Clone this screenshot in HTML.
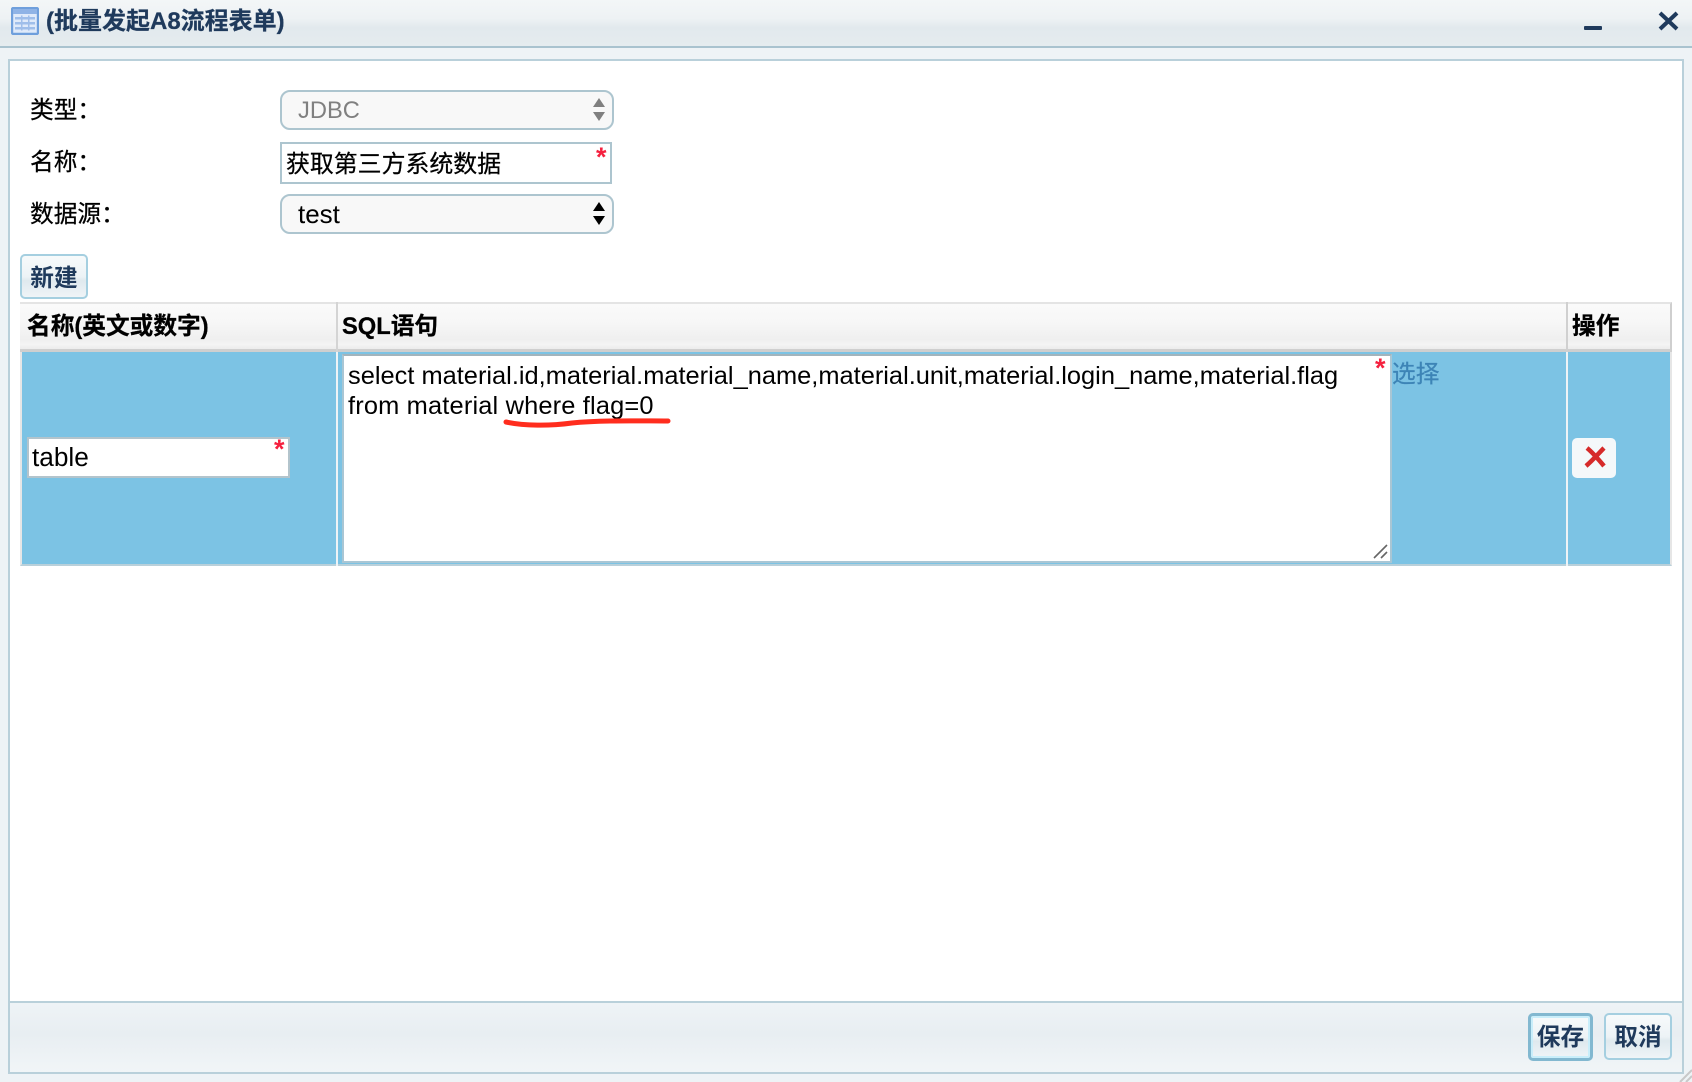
<!DOCTYPE html>
<html><head><meta charset="utf-8"><style>
html,body{margin:0;padding:0}
body{width:1692px;height:1082px;position:relative;overflow:hidden;background:#eef3f6;font-family:"Liberation Sans","Noto Sans CJK SC",sans-serif;color:#000}
div,span,svg{position:absolute;box-sizing:border-box}
.t{white-space:nowrap;line-height:30px;height:30px;font-size:23.7px;-webkit-text-stroke:.25px currentColor}
.l{font-size:25.4px;-webkit-text-stroke:0}
.star{color:#f5213f;font-size:27px;font-weight:bold;line-height:24px;height:24px;white-space:nowrap}
.b{font-weight:bold}
.btn{border:2px solid #a5cfe0;border-radius:5px;background:linear-gradient(#f7fafb 0,#edf3f6 50%,#dfe9ee 60%,#eff4f7 100%);color:#1f3a5c;font-weight:bold;text-align:center;font-size:23.7px}
.sel{background:#f8f8f8;border:2px solid #adc5cf;border-radius:10px}
.th{background:linear-gradient(#fafafa 0,#f7f7f7 40%,#efefef 80%,#f4f4f4 90%,#ececec 100%)}
</style></head><body>
<div style="left:0;top:0;width:1692px;height:48px;background:linear-gradient(#f3f6f7 0,#eef2f4 40%,#e2e9ed 60%,#e5ecef 100%);border-bottom:2px solid #a9c3cf"></div>
<svg style="left:11px;top:7px" width="28" height="28" viewBox="0 0 28 28"><rect x="1" y="1" width="26" height="26" rx="1.5" fill="#dfeafa" stroke="#6f9fdc" stroke-width="2.4"/><rect x="2" y="2" width="24" height="5" fill="#8fb3e6"/><g fill="#9fbeea"><rect x="4" y="10" width="20" height="2.5"/><rect x="4" y="15" width="20" height="2.5"/><rect x="4" y="20" width="20" height="2.5"/><rect x="10" y="8.5" width="1.5" height="15"/><rect x="17" y="8.5" width="1.5" height="15"/></g></svg>
<div class="t b" style="left:46px;top:7px;color:#1f3a5c;font-size:24px">(批量发起A8流程表单)</div>
<div style="left:1584px;top:26px;width:18px;height:4px;background:#1f3a5c;border-radius:1px"></div>
<svg style="left:1658px;top:11px" width="21" height="20" viewBox="0 0 21 20"><path d="M2 2L19 18M19 2L2 18" stroke="#1f3a5c" stroke-width="4"/></svg>

<div style="left:8px;top:59px;width:1676px;height:1015px;border:2px solid #b9d0da;background:#fff"></div>
<div style="left:10px;top:1001px;width:1672px;height:71px;border-top:2px solid #b9d0da;background:linear-gradient(#eef3f6 0,#e8eef2 45%,#f1f5f7 100%)"></div>

<div class="t" style="left:30px;top:96px">类型：</div>
<div class="t" style="left:30px;top:148px">名称：</div>
<div class="t" style="left:30px;top:200px">数据源：</div>

<div class="sel" style="left:280px;top:90px;width:334px;height:40px"></div>
<div class="t" style="left:298px;top:96px;color:#808080;-webkit-text-stroke:0">JDBC</div>
<svg style="left:592px;top:98px" width="14" height="24" viewBox="0 0 14 24"><path d="M7 0L13 9H1ZM1 14H13L7 23Z" fill="#808080"/></svg>

<div style="left:280px;top:142px;width:332px;height:42px;border:2px solid #adc5cf;background:#fff"></div>
<div class="t" style="left:286px;top:150px;font-size:23.9px">获取第三方系统数据</div>
<div class="star" style="left:596px;top:145px">*</div>

<div class="sel" style="left:280px;top:194px;width:334px;height:40px"></div>
<div class="t l" style="left:298px;top:199px;font-size:26px">test</div>
<svg style="left:592px;top:202px" width="14" height="24" viewBox="0 0 14 24"><path d="M7 0L13 9H1ZM1 14H13L7 23Z" fill="#000"/></svg>

<div class="btn" style="left:20px;top:254px;width:68px;height:45px;line-height:46px">新建</div>

<div class="th" style="left:20px;top:302px;width:1652px;height:50px;border-top:2px solid #e4e4e4;border-bottom:3px solid #cfcfcf;border-right:2px solid #cfcfcf"></div>
<div style="left:336px;top:302px;width:2px;height:50px;background:#d4d4d4"></div>
<div style="left:1566px;top:302px;width:2px;height:50px;background:#d0d0d0"></div>
<div class="t b" style="left:27px;top:312px">名称(英文或数字)</div>
<div class="t b" style="left:342px;top:312px">SQL语句</div>
<div class="t b" style="left:1572px;top:312px">操作</div>

<div style="left:20px;top:352px;width:1652px;height:214px;background:#7cc3e4;border-left:2px solid #e6e6e6;border-right:2px solid #e6e6e6;border-bottom:2px solid #b9d0da"></div>
<div style="left:336px;top:352px;width:2px;height:214px;background:#eef3f6"></div>
<div style="left:1566px;top:352px;width:2px;height:214px;background:#eef3f6"></div>

<div style="left:27px;top:437px;width:263px;height:41px;border:2px solid #b3c4cc;background:#fff"></div>
<div class="t l" style="left:32px;top:442px;font-size:26.2px">table</div>
<div class="star" style="left:274px;top:437px">*</div>

<div style="left:342px;top:354px;width:1050px;height:209px;border:2px solid #a9c6d4;border-top-color:#a3b4bc;background:#fff"></div>
<div class="t l" style="left:348px;top:361px;letter-spacing:.01px">select material.id,material.material_name,material.unit,material.login_name,material.flag</div>
<div class="t l" style="left:348px;top:391px;letter-spacing:.17px">from material where flag=0</div>
<div class="star" style="left:1375px;top:356px">*</div>
<svg style="left:1372px;top:542px" width="18" height="18" viewBox="0 0 18 18"><path d="M2 16L15 3M9 16L15 10" stroke="#666" stroke-width="1.6"/></svg>
<svg style="left:500px;top:416px" width="176" height="16" viewBox="0 0 176 16"><path d="M6 6C24 10 50 10 72 7C100 4 140 5 168 5" fill="none" stroke="#ff2d1e" stroke-width="5" stroke-linecap="round"/></svg>
<div class="t" style="left:1392px;top:360px;color:#3d84b6">选择</div>

<div style="left:1572px;top:438px;width:44px;height:40px;background:#f4f8fa;border-radius:5px"></div>
<svg style="left:1584px;top:446px" width="23" height="22" viewBox="0 0 23 22"><path d="M3 2C8 6 15 14 20 20M20 2C15 7 9 14 2 20" fill="none" stroke="#d62a2a" stroke-width="4.5"/></svg>

<div class="btn" style="left:1528px;top:1013px;width:65px;height:48px;line-height:44px;border:3px solid #82b8d0;box-shadow:inset 0 0 0 2px #c9eefa">保存</div>
<div class="btn" style="left:1604px;top:1013px;width:68px;height:47px;line-height:46px">取消</div>
<svg style="left:1678px;top:1068px" width="14" height="14" viewBox="0 0 14 14"><path d="M2 14L14 2M8 14L14 8" stroke="#c8c8c8" stroke-width="2"/></svg>
</body></html>
